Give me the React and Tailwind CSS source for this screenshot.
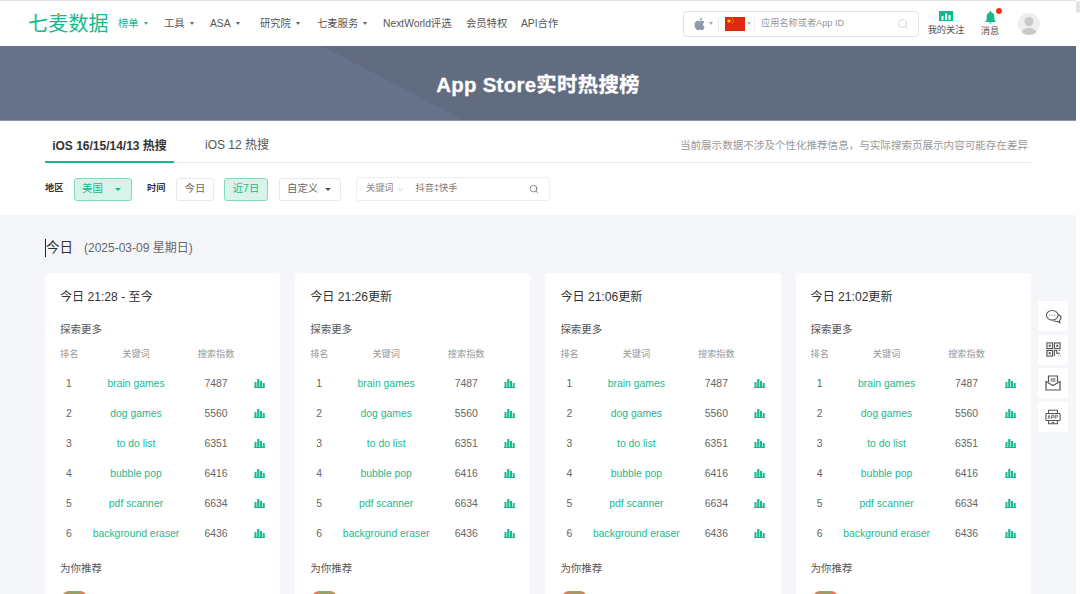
import React from "react";
import { ChevronDown, Search } from "lucide-react";

const cjk = "font-['Liberation_Sans','Noto_Sans_CJK_SC',sans-serif]";

const navItems = [
  { label: "工具", caret: true, w: "w-[46px]" },
  { label: "ASA", caret: true, w: "w-[50px]" },
  { label: "研究院", caret: true, w: "w-[57px]" },
  { label: "七麦服务", caret: true, w: "w-[66px]" },
  { label: "NextWorld评选", w: "w-[83px]" },
  { label: "会员特权", w: "w-[55px]" },
  { label: "API合作", w: "w-[50px]" },
];

const keywords = [
  ["brain games", 7487],
  ["dog games", 5560],
  ["to do list", 6351],
  ["bubble pop", 6416],
  ["pdf scanner", 6634],
  ["background eraser", 6436],
];

const cards = ["今日 21:28 - 至今", "今日 21:26更新", "今日 21:06更新", "今日 21:02更新"];

function Caret({ className = "border-t-[#666]" }) {
  return <span className={`inline-block border-x-[2.5px] border-t-[3px] border-x-transparent ${className}`} />;
}

function BigCaret({ className }) {
  return <span className={`inline-block border-x-[3.5px] border-t-[3.5px] border-x-transparent ${className}`} />;
}

function ChartIcon() {
  return (
    <svg viewBox="0 0 11 10" className="w-[11px] h-[10px] mt-[-2px] fill-[#1ab98f]">
      <rect x="0.500" y="4" width="2" height="5" />
      <rect x="3.200" y="1" width="2.200" height="8" />
      <rect x="6" y="3" width="2" height="6" />
      <rect x="8.700" y="5" width="2" height="4" />
      <rect x="0" y="9" width="11" height="1" />
    </svg>
  );
}

function Card({ title }) {
  return (
    <div className="w-[235.200px] h-[340px] shrink-0 bg-white rounded-[4px] pt-[15px] px-[15px]">
      <div className="h-[18px] leading-[18px] text-[12.100px] text-[#333]">{title}</div>
      <div className="mt-[16px] h-[14px] leading-[14px] text-[10.500px] text-[#555]">探索更多</div>
      <div className="mt-[12px] grid grid-cols-[18px_116px_44px_27px] h-[14px] items-center text-[9.200px] text-[#999] whitespace-nowrap">
        <span>排名</span>
        <span className="text-center">关键词</span>
        <span className="text-center">搜索指数</span>
      </div>
      <div className="mt-[7px]">
        {keywords.map(([word, score], i) => (
          <div key={word} className="grid grid-cols-[18px_116px_44px_27px] h-[30px] items-center text-[10.400px] text-[#666]">
            <span className="text-center">{i + 1}</span>
            <span className="text-center text-[#1ab98f] whitespace-nowrap">{word}</span>
            <span className="text-center">{score}</span>
            <span className="flex justify-end"><ChartIcon /></span>
          </div>
        ))}
      </div>
      <div className="mt-[12px] h-[14px] leading-[14px] text-[10.500px] text-[#555]">为你推荐</div>
      <div className="mt-[16px] ml-[2px] w-[25px] h-[25px] rounded-[7px] bg-[#e8795c] overflow-hidden flex justify-center">
        <div className="w-[13px] h-[2px] bg-[#8aa873]" />
      </div>
    </div>
  );
}

function SideButton({ children }) {
  return <div className="w-[30px] h-[30px] bg-white rounded-[2px] flex items-center justify-center">{children}</div>;
}

export default function App() {
  return (
    <div className={`${cjk} relative flex w-[1080px] h-[594px] overflow-hidden bg-white`}>
      <div className="relative w-[1076px] h-[594px] shrink-0 overflow-hidden bg-[#f5f6fa]">
        <div className="h-px bg-[#e3e3e3]" />

        {/* 顶部导航 */}
        <header className="h-[45px] bg-white flex items-center text-[10.300px] text-[#555]">
          <div className="relative ml-[28px] w-[90px] text-[20px] leading-[24px] tracking-[0.2px] font-normal text-[#13b98d]">
            七麦数据
            <span className="absolute left-[29px] top-[1px] w-[3px] h-[3px] rounded-[1px] bg-[#f5a623]" />
          </div>
          <div className="w-[46px] flex items-center gap-[5px] text-[#1ab98f]">
            榜单 <Caret className="border-t-[#1ab98f]" />
          </div>
          {navItems.map((item) => (
            <div key={item.label} className={`${item.w} flex items-center gap-[5px] whitespace-nowrap`}>
              {item.label}
              {item.caret && <Caret />}
            </div>
          ))}
          <div className="ml-[112px] w-[236px] h-[26px] border border-[#dfe2ea] rounded-[4px] flex items-center">
            <svg viewBox="0 0 24 24" className="ml-[8px] w-[15px] h-[16px] fill-[#8f9bad]">
              <path d="M17.6 12.7c0-2.5 2-3.7 2.1-3.8-1.2-1.700-3-2-3.600-2-1.500-.2-3 .9-3.800.9s-2-.9-3.300-.9c-1.700 0-3.300 1-4.100 2.500-1.800 3.100-.5 7.600 1.200 10.100.9 1.200 1.900 2.600 3.200 2.500 1.300 0 1.800-.8 3.300-.8s2 .8 3.300.8c1.400 0 2.300-1.200 3.100-2.400 1-1.400 1.400-2.800 1.400-2.800s-2.800-1.100-2.800-4.100zM15.100 5.300c.7-.9 1.200-2 1-3.200-1 0-2.200.7-2.900 1.500-.6.700-1.200 1.900-1 3 1.100.1 2.200-.5 2.900-1.300z" />
            </svg>
            <Caret className="ml-[2px] border-t-[#aaa]" />
            <span className="ml-[5px] w-px h-[14px] bg-[#e8eaef]" />
            <svg viewBox="0 0 20 14" className="ml-[6px] w-[20px] h-[14px]">
              <rect width="20" height="14" fill="#de2910" />
              <circle cx="4" cy="4" r="1.600" fill="#ffde00" />
              <circle cx="7.500" cy="2" r=".5" fill="#ffde00" />
              <circle cx="8.500" cy="4" r=".5" fill="#ffde00" />
              <circle cx="7.500" cy="6" r=".5" fill="#ffde00" />
            </svg>
            <Caret className="ml-[2px] border-t-[#bbb]" />
            <span className="ml-[3px] w-px h-[14px] bg-[#e8eaef]" />
            <span className="ml-[6px] flex-1 text-[9.200px] text-[#999] whitespace-nowrap">应用名称或者App ID</span>
            <Search className="mr-[9px] w-[12px] h-[12px] text-[#c5cad3]" strokeWidth={1.500} />
          </div>
          <div className="ml-[9px] w-[36px] flex flex-col items-center text-[9.200px] leading-[12px] text-[#555] whitespace-nowrap">
            <svg viewBox="0 0 14 11" className="w-[14px] h-[11px] mb-[2px]">
              <rect width="14" height="10" fill="#13b98d" />
              <rect x="2.500" y="5" width="2" height="4" fill="#fff" />
              <rect x="6" y="2.500" width="2" height="6.500" fill="#fff" />
              <rect x="9.500" y="4" width="2" height="5" fill="#fff" />
            </svg>
            我的关注
          </div>
          <div className="relative ml-[17px] w-[18px] flex flex-col items-center text-[9.200px] leading-[12px] text-[#555] whitespace-nowrap">
            <svg viewBox="0 0 12 14" className="w-[11px] h-[13px] mb-[1px] fill-[#13b98d]">
              <path d="M6 0c.6 0 1 .4 1 1v.6c2 .5 3.200 2.200 3.200 4.400v3.500L12 12H0l1.800-2.500V6c0-2.200 1.200-3.900 3.200-4.400V1c0-.6.400-1 1-1z" />
              <path d="M4.500 12.500h3L6 14z" />
            </svg>
            消息
            <span className="absolute right-[-3px] top-[-3px] w-[6px] h-[6px] rounded-full bg-[#f5341a]" />
          </div>
          <div className="ml-[19px] w-[22px] h-[22px] rounded-full bg-[#eeeeee] overflow-hidden">
            <svg viewBox="0 0 22 22" className="w-full h-full fill-[#c9c9c9]">
              <circle cx="11" cy="8.500" r="4.500" />
              <path d="M3.500 22c0-5 3-7 7.500-7s7.500 2 7.500 7z" />
            </svg>
          </div>
        </header>

        {/* 标题横幅 */}
        <section className="relative h-[75px] bg-[#67728a] flex items-center justify-center overflow-hidden border-b border-[#8c95a6]">
          <svg viewBox="0 0 754 75" className="absolute left-[322px] top-0 w-[754px] h-[75px] fill-[#626c80]">
            <polygon points="0,0 754,0 754,75 143,75" />
          </svg>
          <h1 className="relative mt-[5px] text-[20.400px] font-bold text-white tracking-[0.3px] [-webkit-text-stroke:0.3px_white]">App Store实时热搜榜</h1>
        </section>

        {/* 筛选区 */}
        <section className="h-[94px] bg-white pl-[45px] pr-[45px]">
          <div className="relative h-[42px] flex items-end border-b border-[#e8e8e8]">
            <div className="w-[129px] h-[42px] pt-[16px] text-center text-[12px] font-bold text-[#333] border-b-[2px] border-[#13b98d] mb-[-1px] whitespace-nowrap">
              iOS 16/15/14/13 热搜
            </div>
            <div className="ml-[31px] h-[42px] pt-[16px] text-[12px] text-[#555]">iOS 12 热搜</div>
            <div className="ml-auto mr-[3px] h-[42px] pt-[18px] text-[10.550px] text-[#999] whitespace-nowrap">
              当前展示数据不涉及个性化推荐信息，与实际搜索页展示内容可能存在差异
            </div>
          </div>
          <div className="mt-[14px] flex items-center text-[10.400px]">
            <span className="w-[29px] text-[9.200px] font-bold text-[#333]">地区</span>
            <div className="w-[58px] h-[23px] pl-[7px] pr-[10px] flex items-center justify-between rounded-[3px] border border-[#7fdcc0] bg-[#d7f3ea] text-[#1ab98f]">
              美国 <BigCaret className="border-t-[#1ab98f]" />
            </div>
            <span className="ml-[15px] w-[29px] text-[9.200px] font-bold text-[#333]">时间</span>
            <div className="w-[38px] h-[23px] flex items-center justify-center rounded-[3px] border border-[#e8e8e8] text-[#666]">今日</div>
            <div className="ml-[10px] w-[44px] h-[23px] flex items-center justify-center rounded-[3px] border border-[#7fdcc0] bg-[#d7f3ea] text-[#1ab98f]">近7日</div>
            <div className="ml-[11px] w-[62px] h-[23px] pl-[7px] pr-[9px] flex items-center justify-between rounded-[3px] border border-[#e8e8e8] text-[#666]">
              自定义 <BigCaret className="border-t-[#555]" />
            </div>
            <div className="ml-[15px] w-[194px] h-[24px] pl-[9px] pr-[10px] flex items-center rounded-[3px] border border-[#eeeeee] text-[9.200px] text-[#888]">
              <span>关键词</span>
              <ChevronDown className="ml-[2px] w-[9px] h-[9px] text-[#bbb]" />
              <span className="ml-[11px] flex-1 text-[#777]">抖音‡快手</span>
              <Search className="w-[10px] h-[10px] text-[#777]" />
            </div>
          </div>
        </section>

        {/* 榜单内容 */}
        <main className="px-[45px] pt-[23px]">
          <div className="h-[19px] flex items-center text-[#333]">
            <span className="relative mt-px pl-px text-[13.500px]">
              今日
              <span className="absolute left-0 top-[1px] bottom-[1px] w-px bg-[#222]" />
            </span>
            <span className="ml-[11px] mt-px text-[12px] text-[#666]">(2025-03-09 星期日)</span>
          </div>
          <div className="mt-[16px] flex gap-[15px]">
            {cards.map((title) => (
              <Card key={title} title={title} />
            ))}
          </div>
        </main>

        {/* 右侧浮动按钮 */}
        <aside className="absolute left-[1038px] top-[301px] flex flex-col gap-[3.500px]">
          <SideButton>
            <svg viewBox="0 0 20 18" className="w-[17px] h-[15px] fill-none stroke-[#555]" strokeWidth="1.300">
              <ellipse cx="8.500" cy="7.500" rx="7" ry="5.800" fill="#fff" />
              <path d="M15.500 6.500c2 .7 3.500 2.300 3.500 4 0 1.400-.8 2.400-1.800 3.200l.5 2.800-2.800-1.600c-1.800.3-3.500 0-4.800-1" />
              <path d="M5 7.500h1M8 7.500h1M11 7.500h1" />
            </svg>
          </SideButton>
          <SideButton>
            <svg viewBox="0 0 16 16" className="w-[15px] h-[15px] fill-none stroke-[#555]" strokeWidth="1.200">
              <rect x="1" y="1" width="6" height="6" />
              <rect x="9" y="1" width="6" height="6" />
              <rect x="1" y="9" width="6" height="6" />
              <rect x="3.500" y="3.500" width="1" height="1" />
              <rect x="11.500" y="3.500" width="1" height="1" />
              <rect x="3.500" y="11.500" width="1" height="1" />
              <path d="M9 15v-6h2.500v3H15M13.500 9H15M13 14.500h.5M15 14.500h.5" />
            </svg>
          </SideButton>
          <SideButton>
            <svg viewBox="0 0 16 16" className="w-[16px] h-[16px] fill-none stroke-[#555]" strokeWidth="1.200">
              <path d="M3.500 7V1h9v6" />
              <path d="M5.500 4h5M5.500 6h5" />
              <path d="M1 6.500V15h14V6.500L8 10.500z" />
            </svg>
          </SideButton>
          <SideButton>
            <svg viewBox="0 0 18 18" className="w-[16px] h-[16px] fill-none stroke-[#555]" strokeWidth="1.200">
              <path d="M4 5V1.500h10V5M4 13v3.500h10V13" />
              <rect x="1" y="5" width="16" height="8" rx="1" />
              <path d="M3.500 11l1.200-4 1.200 4M7.500 11V7h1.800a1 1 0 0 1 0 2.200H7.500M11.500 11V7h1.800a1 1 0 0 1 0 2.200h-1.800" strokeWidth=".9" />
              <path d="M7.500 15h3" />
            </svg>
          </SideButton>
        </aside>
      </div>

      {/* 滚动条 */}
      <div className="w-[4px] h-[594px] bg-white pt-px">
        <div className="w-[4px] h-[12px] rounded-full bg-[#e3e3e3]" />
      </div>
    </div>
  );
}
